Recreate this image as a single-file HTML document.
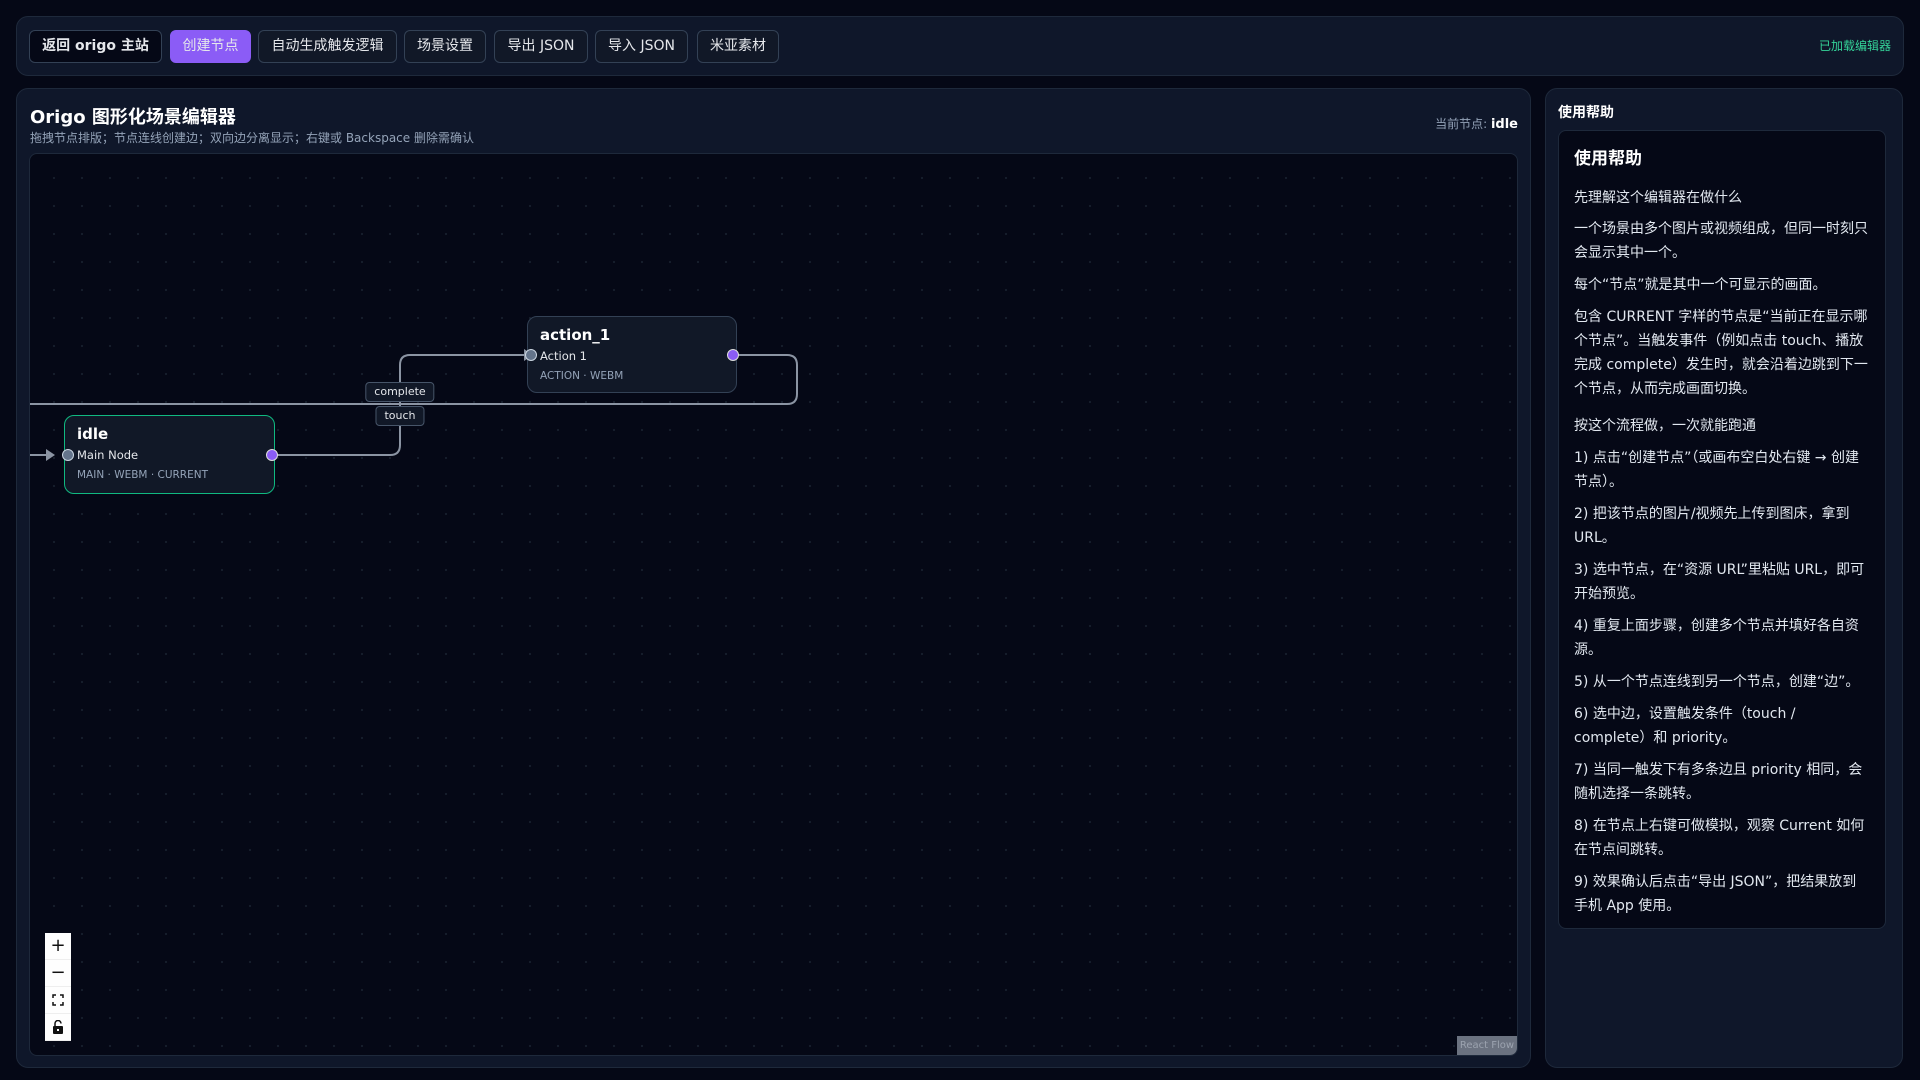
<!DOCTYPE html>
<html><head><meta charset="utf-8"><style>
*{box-sizing:border-box;margin:0;padding:0}
body{width:1920px;height:1080px;background:#050816;font-family:"DejaVu Sans","Liberation Sans","Noto Sans CJK SC",sans-serif;color:#e5e7eb;position:relative;overflow:hidden}
.bar{position:absolute;left:16px;top:16px;width:1888px;height:60px;background:#0f172a;border:1px solid #1e293b;border-radius:12px}
.btn{position:absolute;top:13px;height:33px;border:1px solid #334155;border-radius:6px;background:#111827;color:#e5e7eb;font-size:14px;line-height:31px;text-align:center}
.panel{position:absolute;background:#0f172a;border:1px solid #1e293b;border-radius:12px}
.canvas{position:absolute;left:29px;top:153px;width:1489px;height:903px;border:1px solid #1e293b;border-radius:8px;background-color:#050816;background-image:radial-gradient(circle,#161e2c 1px,transparent 1.3px);background-size:28px 28px;background-position:10px 10px;overflow:hidden}
.node{position:absolute;background:#111827;border:1px solid #334155;border-radius:10px;padding:8px 12px}
.node b{display:block;font-size:15px;color:#fff;line-height:20px}
.node .s{font-size:11.5px;color:#e5e7eb;margin-top:3px;line-height:16px}
.node .t{font-size:10.5px;color:#94a3b8;margin-top:5px;line-height:14px}
.lbl{position:absolute;background:#111827;border:1px solid #475569;border-radius:4px;font-size:11px;color:#e5e7eb;line-height:18px;padding:0 8px;transform:translate(-50%,-50%)}
.help{position:absolute;left:1558px;top:130px;width:328px;height:799px;background:#050816;border:1px solid #1e293b;border-radius:8px;padding:16px 16px 0 15px}
.help h3{font-size:17px;font-weight:bold;color:#fff;margin-bottom:14.5px;line-height:24px}
.help p{font-size:14px;line-height:24px;color:#e2e8f0;margin-bottom:7.95px}
.ctrl{position:absolute;left:45px;top:933px;width:26px;background:#fefefe}
.ctrl div{height:27px;border-bottom:1px solid #eee;color:#111;text-align:center;font-size:18px;line-height:26px;position:relative}
</style></head><body>
<div class="bar">
<div class="btn" style="left:12px;width:133px;background:#050816;font-weight:bold">返回 origo 主站</div>
<div class="btn" style="left:153px;width:81px;background:#8b5cf6;border-color:#8b5cf6">创建节点</div>
<div class="btn" style="left:241px;width:139px">自动生成触发逻辑</div>
<div class="btn" style="left:387px;width:82px">场景设置</div>
<div class="btn" style="left:477px;width:94px">导出 JSON</div>
<div class="btn" style="left:578px;width:93px">导入 JSON</div>
<div class="btn" style="left:680px;width:82px">米亚素材</div>
<div style="position:absolute;right:12px;top:20px;font-size:12px;color:#34d399">已加载编辑器</div>
</div>
<div class="panel" style="left:16px;top:88px;width:1515px;height:980px">
<div style="position:absolute;left:13px;top:14px;font-size:18px;font-weight:bold;color:#fff">Origo 图形化场景编辑器</div>
<div style="position:absolute;left:13px;top:40px;font-size:12px;color:#94a3b8">拖拽节点排版；节点连线创建边；双向边分离显示；右键或 Backspace 删除需确认</div>
<div style="position:absolute;right:12px;top:26px;font-size:12px;color:#94a3b8">当前节点: <b style="color:#fff;font-size:13px">idle</b></div>
</div>
<div class="canvas">
<svg width="1489" height="903" style="position:absolute;left:0;top:0" fill="none" stroke="#8b94a3" stroke-width="2">
<path d="M242 301 H360 Q370 301 370 291 V211 Q370 201 380 201 H494"/>
<path d="M703 201 H757 Q767 201 767 211 V240 Q767 250 757 250 H0"/>
<path d="M0 301 H22"/>
<polygon points="494,195 503,201 494,207" fill="#8b94a3" stroke="none"/>
<polygon points="16,295 25,301 16,307" fill="#8b94a3" stroke="none"/>
</svg>
<div class="node" style="left:34px;top:261px;width:211px;height:79px;border-color:#10b981"><b>idle</b><div class="s">Main Node</div><div class="t">MAIN · WEBM · CURRENT</div></div>
<div class="node" style="left:497px;top:162px;width:210px;height:77px"><b>action_1</b><div class="s">Action 1</div><div class="t">ACTION · WEBM</div></div>
<div style="position:absolute;left:32px;top:295px;width:12px;height:12px;border-radius:50%;background:#64748b;border:1px solid #cbd5e1"></div>
<div style="position:absolute;left:236px;top:295px;width:12px;height:12px;border-radius:50%;background:#8b5cf6;border:1px solid #ddd"></div>
<div style="position:absolute;left:495px;top:195px;width:12px;height:12px;border-radius:50%;background:#64748b;border:1px solid #cbd5e1"></div>
<div style="position:absolute;left:697px;top:195px;width:12px;height:12px;border-radius:50%;background:#8b5cf6;border:1px solid #ddd"></div>
<div class="lbl" style="left:370px;top:238px">complete</div>
<div class="lbl" style="left:370px;top:262px">touch</div>
<div style="position:absolute;right:0;bottom:0;width:60px;height:19px;background:#6b7280;color:#9ca3af;font-size:10px;line-height:19px;text-align:center">React Flow</div>
</div>
<div class="ctrl"><div>+</div><div>−</div><div><svg width="12" height="12" viewBox="0 0 12 12" style="position:absolute;left:7px;top:7px" fill="none" stroke="#111" stroke-width="1.5"><path d="M1 4V1H4M8 1H11V4M11 8V11H8M4 11H1V8"/></svg></div><div><svg width="12" height="14" viewBox="0 0 12 14" style="position:absolute;left:7px;top:6px"><path d="M3 6V3.5a3 3 0 0 1 6 0" fill="none" stroke="#111" stroke-width="1.5"/><rect x="1" y="6" width="10" height="8" rx="1" fill="#111"/><rect x="5" y="9" width="2" height="2" fill="#fff"/></svg></div></div>
<div class="panel" style="left:1545px;top:88px;width:358px;height:980px">
<div style="position:absolute;left:12px;top:13px;font-size:14px;font-weight:bold;color:#fff">使用帮助</div>
</div>
<div class="help">
<h3>使用帮助</h3>
<p>先理解这个编辑器在做什么</p>
<p>一个场景由多个图片或视频组成，但同一时刻只会显示其中一个。</p>
<p>每个“节点”就是其中一个可显示的画面。</p>
<p>包含 CURRENT 字样的节点是“当前正在显示哪个节点”。当触发事件（例如点击 touch、播放完成 complete）发生时，就会沿着边跳到下一个节点，从而完成画面切换。</p>
<p style="margin-top:13px">按这个流程做，一次就能跑通</p>
<p>1) 点击“创建节点”（或画布空白处右键 → 创建节点）。</p>
<p>2) 把该节点的图片/视频先上传到图床，拿到 URL。</p>
<p>3) 选中节点，在“资源 URL”里粘贴 URL，即可开始预览。</p>
<p>4) 重复上面步骤，创建多个节点并填好各自资源。</p>
<p>5) 从一个节点连线到另一个节点，创建“边”。</p>
<p>6) 选中边，设置触发条件（touch / complete）和 priority。</p>
<p>7) 当同一触发下有多条边且 priority 相同，会随机选择一条跳转。</p>
<p>8) 在节点上右键可做模拟，观察 Current 如何在节点间跳转。</p>
<p>9) 效果确认后点击“导出 JSON”，把结果放到手机 App 使用。</p>
</div>
</body></html>
